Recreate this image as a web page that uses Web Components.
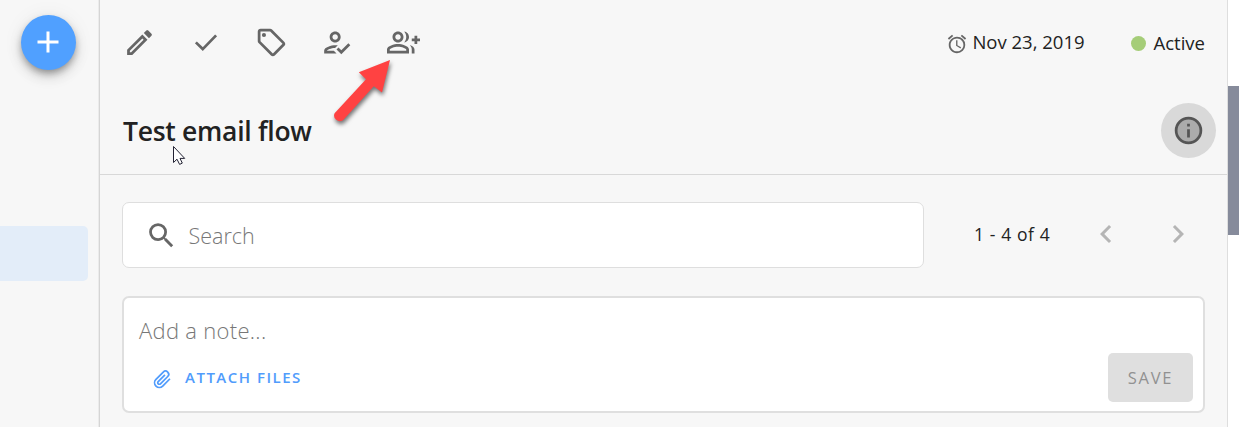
<!DOCTYPE html>
<html lang="en">
<head>
<meta charset="utf-8">
<title>Test email flow</title>
<style>
body{margin:0;background:#f7f7f7;font-family:"Open Sans","Noto Sans",sans-serif;color:#222;overflow:hidden}
</style>
</head>
<body>
<mail-app></mail-app>
<script>
const define=(name,html,setup)=>customElements.define(name,class extends HTMLElement{
  constructor(){
    super();
    this.attachShadow({mode:'open'}).innerHTML=html;
    if(setup)setup(this,this.shadowRoot);
  }
});

const icons={
  edit:'<path d="M14.06 9.02l.92.92L5.92 19H5v-.92l9.06-9.06M17.66 3c-.25 0-.51.1-.7.29l-1.83 1.83 3.75 3.75 1.83-1.83a1 1 0 0 0 0-1.41l-2.34-2.34A.98.98 0 0 0 17.66 3zm-3.6 3.19L3 17.25V21h3.75L17.81 9.94l-3.75-3.75z"/>',
  check:'<path d="M5 11.9l5 4.9 9.7-10" fill="none" stroke="currentColor" stroke-width="2"/>',
  tag:'<path d="M21.41 11.58l-9-9C12.05 2.22 11.55 2 11 2H4c-1.1 0-2 .9-2 2v7c0 .55.22 1.05.59 1.42l9 9c.36.36.86.58 1.41.58s1.05-.22 1.41-.59l7-7c.37-.36.59-.86.59-1.41s-.23-1.06-.59-1.42zM13 20.01L4 11V4h7v-.01l9 9-7 7.02z"/><circle cx="6.5" cy="6.5" r="1.5"/>',
  assign:'<path transform="translate(-.7)" d="M11 12c2.21 0 4-1.79 4-4s-1.79-4-4-4-4 1.79-4 4 1.79 4 4 4zm0-6c1.1 0 2 .9 2 2s-.9 2-2 2-2-.9-2-2 .9-2 2-2zm-1 12H5c0-.64 3.13-2.02 5.92-2l2-2A13 13 0 0 0 11 13.98c-2.67 0-8 1.34-8 4V20h9l-2-2zm10.6-5.5l-5.13 5.17-2.07-2.08L12 17l3.47 3.5L22 13.91z"/>',
  group:'<path d="M22 9V7h-2v2h-2v2h2v2h2v-2h2V9zM8 12c2.21 0 4-1.79 4-4s-1.79-4-4-4-4 1.79-4 4 1.79 4 4 4zm0-6c1.1 0 2 .9 2 2s-.9 2-2 2-2-.9-2-2 .9-2 2-2zm0 7c-2.67 0-8 1.34-8 4v3h16v-3c0-2.66-5.33-4-8-4zm6 5H2v-.99C2.2 16.29 5.3 15 8 15s5.8 1.29 6 2v1zM12.51 4.05C13.43 5.11 14 6.49 14 8s-.57 2.89-1.49 3.95C14.47 11.7 16 10.04 16 8s-1.53-3.7-3.49-3.95zm4.02 9.78C17.42 14.66 18 15.7 18 17v3h2v-3c0-1.45-1.59-2.51-3.47-3.17z"/>',
  alarm:'<path d="M22 5.72l-4.6-3.86-1.29 1.53 4.6 3.86L22 5.72zM7.88 3.39L6.6 1.86 2 5.71l1.29 1.53 4.59-3.85zM12.5 8H11v6l4.75 2.85.75-1.23-4-2.37V8zM12 4c-4.97 0-9 4.03-9 9s4.02 9 9 9a9 9 0 0 0 0-18zm0 16c-3.87 0-7-3.13-7-7s3.13-7 7-7 7 3.13 7 7-3.13 7-7 7z"/>',
  info:'<circle cx="12" cy="12" r="9" fill="#ababab" stroke="currentColor" stroke-width="2"/><path d="M11 7h2v2h-2zM11 11h2v6h-2z"/>',
  search:'<path d="M15.5 14h-.79l-.28-.27A6.47 6.47 0 0 0 16 9.5 6.5 6.5 0 1 0 9.5 16c1.61 0 3.09-.59 4.23-1.57l.27.28v.79l5 4.99L20.49 19l-4.99-5zm-6 0a4.5 4.5 0 1 1 0-9 4.5 4.5 0 0 1 0 9z"/>',
  prev:'<path d="M15.41 7.41L14 6l-6 6 6 6 1.41-1.41L10.83 12z"/>',
  next:'<path d="M8.59 16.59L10 18l6-6-6-6-1.41 1.41L13.17 12z"/>',
  clip:'<path d="M21.44 11.05l-9.19 9.19a6 6 0 0 1-8.49-8.49l9.19-9.19a4 4 0 0 1 5.66 5.66l-9.2 9.19a2 2 0 0 1-2.83-2.83l8.49-8.48" fill="none" stroke="currentColor" stroke-width="2.2"/>',
  plus:'<path d="M10.5 1.5h3v9h9v3h-9v9h-3v-9h-9v-3h9z"/>'
};
customElements.define('ui-icon',class extends HTMLElement{
  constructor(){super();this.attachShadow({mode:'open'})}
  connectedCallback(){
    const s=this.getAttribute('size')||33;
    this.shadowRoot.innerHTML=`<style>:host{display:block;flex:none;line-height:0}svg{display:block;overflow:visible}</style><svg width="${s}" height="${s}" viewBox="0 0 24 24" fill="currentColor">${icons[this.getAttribute('name')]}</svg>`;
  }
});

define('side-nav',`<style>
:host{display:block;box-sizing:border-box;width:100px;flex:none;border-right:1px solid #d5d5d5;box-shadow:inset -1px 0 #ebebeb}
.fab{margin:15px 0 0 21px;width:55px;height:55px;border-radius:50%;background:#50a0ff;color:#fff;display:grid;place-items:center;box-shadow:0 4px 7px -1px #0005,0 7px 14px #0002,0 1px 22px #0000000f}
.fab ui-icon{margin:-1px 1px 0 0}
.row{margin-top:156px;width:88px;height:55px;background:#e3edf9;border-radius:0 5px 5px 0}
</style><div class="fab"><ui-icon name="plus" size="24"></ui-icon></div><div class="row"></div>`);

define('tool-bar',`<style>
:host{display:flex;align-items:center;box-sizing:border-box;height:85px;padding:0 22px 0 22.5px;color:#666}
.tools{display:flex;gap:33px;flex:1}
.date{display:flex;align-items:center;gap:4px;font-size:18.5px;line-height:26px;margin-right:46px}
.date .t{padding-bottom:1px}
.date ui-icon{margin-top:2px}
.state{display:flex;align-items:center;gap:8px;font-size:18.5px;line-height:26px}
.t{color:#222}.dot{width:15px;height:15px;margin-top:2px;border-radius:50%;background:#a5cd78}
</style><div class="tools"><ui-icon name="edit"></ui-icon><ui-icon name="check"></ui-icon><ui-icon name="tag"></ui-icon><ui-icon name="assign"></ui-icon><ui-icon name="group"></ui-icon></div>
<div class="date"><ui-icon name="alarm" size="22"></ui-icon><span class="t"><slot name="date"></slot></span></div>
<div class="state"><span class="dot"></span><span class="t"><slot name="state"></slot></span></div>`);

define('title-bar',`<style>
:host{display:flex;align-items:center;justify-content:space-between;box-sizing:border-box;height:90px;padding:2px 11px 0 23px;border-bottom:1px solid #d8d8d8}
h1{margin:0;font-size:26.5px;font-weight:600;line-height:36px;letter-spacing:-.28px;color:#222;white-space:nowrap}
.info{width:55px;height:55px;border-radius:50%;background:#d9d9d9;color:#555;display:grid;place-items:center}
</style><h1><slot></slot></h1><div class="info"><ui-icon name="info"></ui-icon></div>`);

define('search-row',`<style>
:host{display:flex;align-items:center;margin:27px 22px 0 22px}
.box{box-sizing:border-box;width:802px;height:66px;border:1px solid #dedede;border-radius:7px;background:#fff;display:flex;align-items:center;padding-left:21.5px;gap:11px;color:#666}
.ph{font-size:21.5px;font-weight:300;color:#777;letter-spacing:0;line-height:30px;padding-top:1px}
.count{font-size:17.5px;letter-spacing:.6px;width:124px;margin-left:50px;line-height:24px;white-space:nowrap;padding-bottom:2px}
.pg{display:flex;gap:36px;color:#b5b5b5;margin:-2px 0 0 -10px}
</style><div class="box"><ui-icon name="search"></ui-icon><span class="ph">Search</span></div>
<span class="count"><slot></slot></span><div class="pg"><ui-icon name="prev" size="36"></ui-icon><ui-icon name="next" size="36"></ui-icon></div>`);

define('note-box',`<style>
:host{display:flex;flex-direction:column;justify-content:space-between;box-sizing:border-box;margin:28px 22px 0;height:117px;border:2px solid #dfdfdf;border-radius:7px;background:#fff;padding:17px 10px 9px 15px}
.ph{font-size:22px;font-weight:300;color:#777;letter-spacing:.3px;line-height:30px}
.foot{display:flex;align-items:center;justify-content:space-between}
.attach{display:flex;align-items:center;gap:13px;color:#519cfc;font-size:15px;font-weight:600;letter-spacing:1.5px;padding-left:14px;line-height:22px}
.attach span{padding-bottom:2px}.attach ui-icon{margin-top:3px}
.save{width:85px;height:49px;border-radius:5px;background:#dfdfdf;color:#919191;font-size:16.5px;font-weight:500;letter-spacing:1.7px;display:grid;place-items:center}
</style><div class="ph">Add a note...</div><div class="foot"><div class="attach"><ui-icon name="clip" size="19"></ui-icon><span>ATTACH FILES</span></div><div class="save"><span>SAVE</span></div></div>`);

define('pointer-marks',`<style>
:host{position:absolute;inset:0;pointer-events:none}svg{display:block}
.a{filter:drop-shadow(1px 3px 2px #0008)}
</style><svg width="1239" height="427"><path class="a" d="M390 60L382 92.5L373.8 86.3L343 120.2A5.7 5.7 0 0 1 334.6 113.2L366 79.2L358.8 72.2Z" fill="#ff4242"/>
<path d="M173.5 146.5V162.5L177 159.2L179.6 164.4L182.3 163.1L180 158.4H184.7Z" fill="#fff" stroke="#222233"/></svg>`);

define('mail-app',`<style>
:host{display:flex;position:relative;width:1239px;height:427px;overflow:hidden}
main{box-sizing:border-box;width:1128px;border-right:1px solid #dedede}
.scroll{flex:1;background:#fff;padding-top:86px}.thumb{height:149px;background:#868b9b}
</style><side-nav></side-nav><main>
<tool-bar><span slot="date">Nov 23, 2019</span><span slot="state">Active</span></tool-bar>
<title-bar>Test email flow</title-bar>
<search-row>1 - 4 of 4</search-row><note-box></note-box></main>
<div class="scroll"><div class="thumb"></div></div><pointer-marks></pointer-marks>`);
</script>
</body>
</html>
